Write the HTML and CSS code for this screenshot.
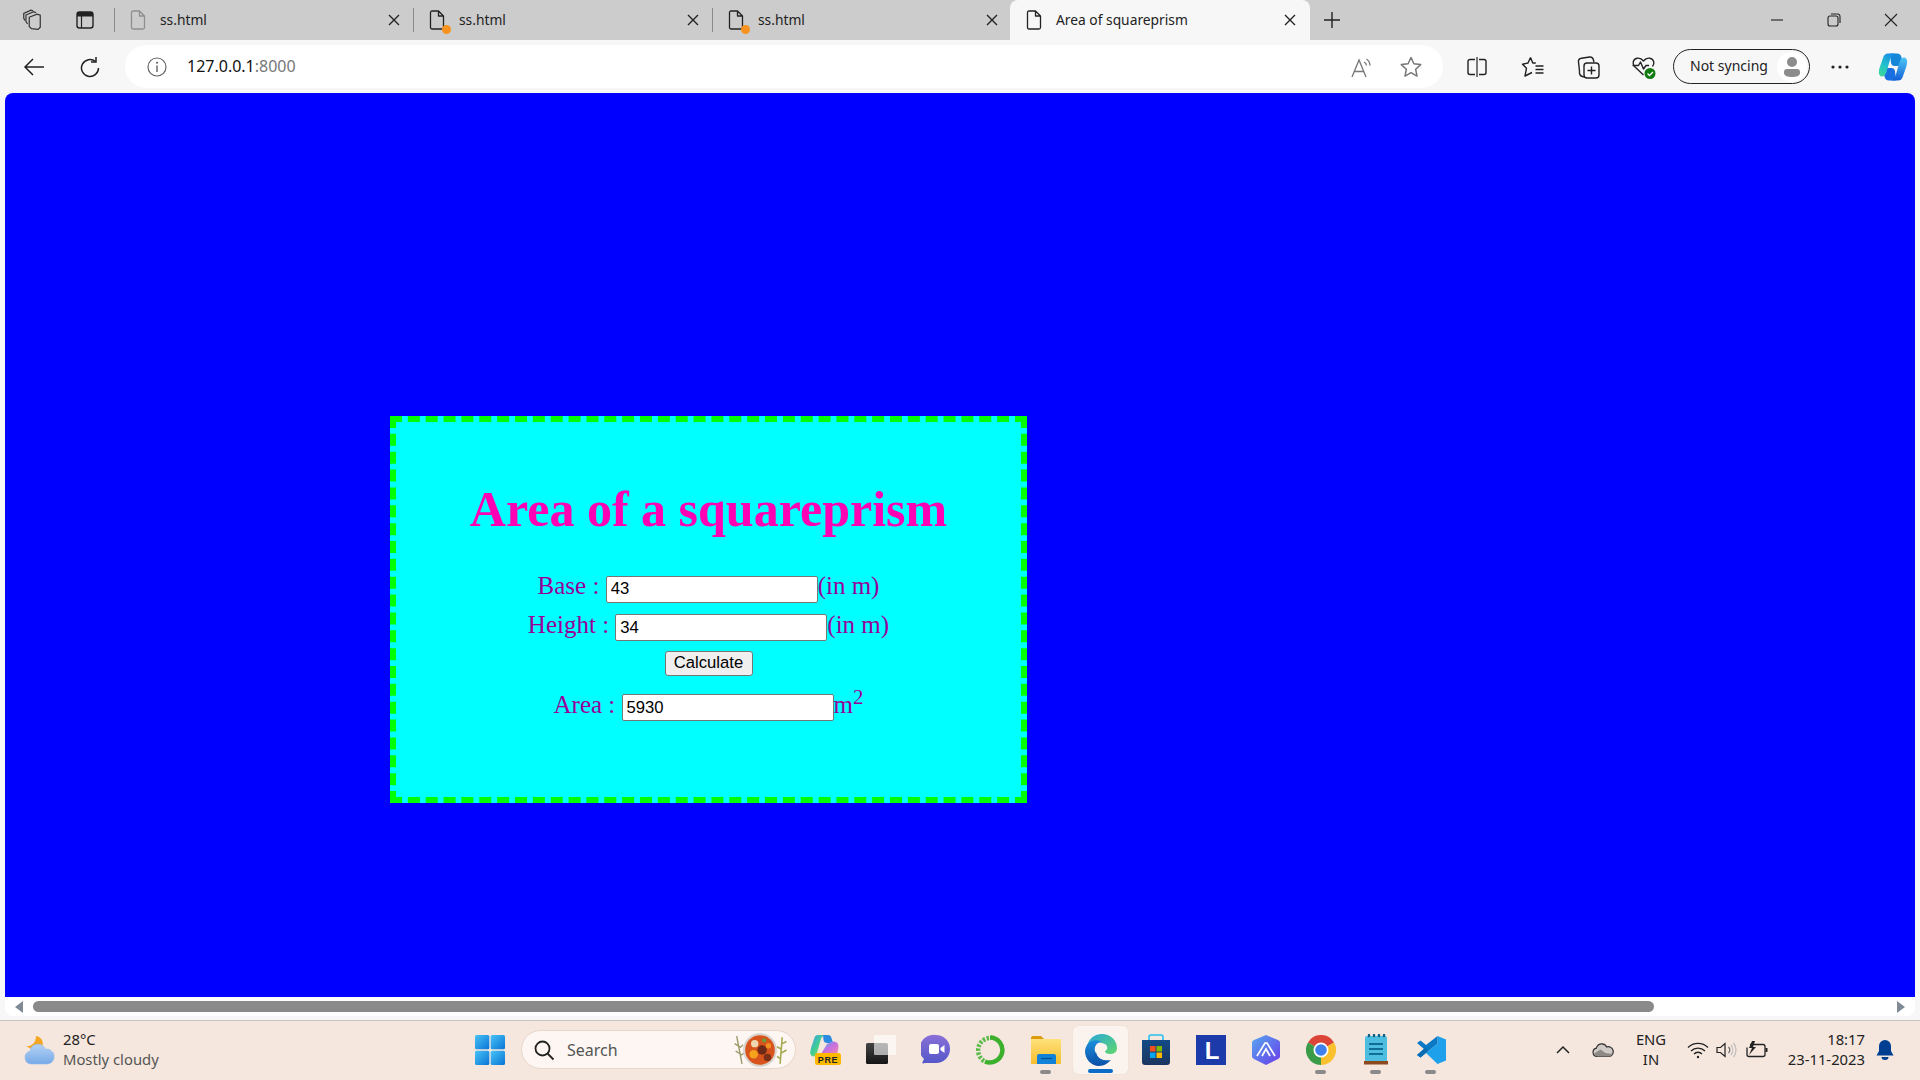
FILE: index.html
```html
<!DOCTYPE html>
<html lang="en">
<head>
    <meta charset="UTF-8">
    <title>Area of squareprism</title>
    <link rel="stylesheet" href="styles.css">
</head>
<body>
    <svg class="defs" width="0" height="0">
        <defs>
            <symbol id="doc" viewBox="0 0 16 20">
                <path d="M2.5 1h7L14.5 6v11.5a1.5 1.5 0 0 1-1.5 1.5H3a1.5 1.5 0 0 1-1.5-1.5v-15A1.5 1.5 0 0 1 2.5 1zM9.5 1v5h5" fill="none" stroke="currentColor" stroke-width="1.3" stroke-linejoin="round"/>
            </symbol>
            <symbol id="close" viewBox="0 0 12 12">
                <path d="M1 1l10 10M11 1L1 11" fill="none" stroke="currentColor" stroke-width="1.4"/>
            </symbol>
            <linearGradient id="copilotA" x1="0.6" y1="0" x2="0.2" y2="1">
                <stop offset="0" stop-color="#1b8fe8"/>
                <stop offset="0.55" stop-color="#22c4c8"/>
                <stop offset="1" stop-color="#3fd89a"/>
            </linearGradient>
            <linearGradient id="copilotB" x1="0.5" y1="0" x2="0.4" y2="1">
                <stop offset="0" stop-color="#4cc4f4"/>
                <stop offset="1" stop-color="#1560d8"/>
            </linearGradient>
            <linearGradient id="copilotC" x1="0" y1="0" x2="1" y2="1">
                <stop offset="0" stop-color="#38b6e8"/>
                <stop offset="0.5" stop-color="#c86fe0"/>
                <stop offset="1" stop-color="#f08ab0"/>
            </linearGradient>
            <linearGradient id="copilotD" x1="0" y1="0" x2="1" y2="1">
                <stop offset="0" stop-color="#3fa0f0"/>
                <stop offset="0.5" stop-color="#3ecf90"/>
                <stop offset="1" stop-color="#f5d040"/>
            </linearGradient>
            <linearGradient id="cloud" x1="0" y1="0" x2="0" y2="1">
                <stop offset="0" stop-color="#b5d3f5"/>
                <stop offset="1" stop-color="#76a9e8"/>
            </linearGradient>
            <linearGradient id="win" x1="0" y1="0" x2="1" y2="1">
                <stop offset="0" stop-color="#47c3f7"/>
                <stop offset="1" stop-color="#0a74d6"/>
            </linearGradient>
            <linearGradient id="meet" x1="0" y1="0" x2="0" y2="1">
                <stop offset="0" stop-color="#8a6fd8"/>
                <stop offset="1" stop-color="#5457c8"/>
            </linearGradient>
            <linearGradient id="folder" x1="0" y1="0" x2="0" y2="1">
                <stop offset="0" stop-color="#fde27a"/>
                <stop offset="1" stop-color="#f8bd2c"/>
            </linearGradient>
            <linearGradient id="edgeA" x1="0" y1="0" x2="1" y2="1">
                <stop offset="0" stop-color="#2aa6dc"/>
                <stop offset="1" stop-color="#5fd86c"/>
            </linearGradient>
            <linearGradient id="edgeB" x1="0" y1="0" x2="0" y2="1">
                <stop offset="0" stop-color="#1a8fdc"/>
                <stop offset="1" stop-color="#0c4fa8"/>
            </linearGradient>
            <linearGradient id="store" x1="0" y1="0" x2="0" y2="1">
                <stop offset="0" stop-color="#134a86"/>
                <stop offset="1" stop-color="#1b3560"/>
            </linearGradient>
            <linearGradient id="hexa" x1="0" y1="0" x2="1" y2="1">
                <stop offset="0" stop-color="#56a8f0"/>
                <stop offset="1" stop-color="#6a3ce8"/>
            </linearGradient>
            <linearGradient id="black" x1="0" y1="0" x2="0" y2="1">
                <stop offset="0" stop-color="#444"/>
                <stop offset="1" stop-color="#151515"/>
            </linearGradient>
        </defs>
    </svg>

    <!-- browser tabs -->
    <div class="tabstrip">
        <div class="strip-tools">
            <svg class="strip-icon" width="22" height="22" viewBox="0 0 18 20" fill="none" stroke="#333" stroke-width="1.100">
                <path d="M6.500 7.500l7-2.800 3 .9v11l-2 2-6-.7-2-2z"/>
                <path d="M5 13.500l-1.500-2V5.500l7-3 2.200.9"/>
                <path d="M2.600 10.500L1.500 8.500V4l6.500-3 2 .6"/>
            </svg>
            <svg class="strip-icon" width="20" height="20" viewBox="0 0 20 20">
                <rect x="2" y="2" width="16" height="16" rx="2.500" fill="none" stroke="#222" stroke-width="1.400"/>
                <path d="M2 5a3 3 0 0 1 3-3h10a3 3 0 0 1 3 3v1.500H2z" fill="#222"/>
                <path d="M6.500 6v12" stroke="#222" stroke-width="1.200"/>
            </svg>
        </div>
        <div class="tab">
            <svg class="tab-doc faded" width="16" height="20"><use href="#doc"/></svg>
            <span class="tab-title">ss.html</span>
            <svg class="tab-close" width="12" height="12"><use href="#close"/></svg>
        </div>
        <div class="tab">
            <span class="doc-wrap">
                <svg class="tab-doc" width="16" height="20"><use href="#doc"/></svg>
                <i class="unsaved"></i>
            </span>
            <span class="tab-title">ss.html</span>
            <svg class="tab-close" width="12" height="12"><use href="#close"/></svg>
        </div>
        <div class="tab">
            <span class="doc-wrap">
                <svg class="tab-doc" width="16" height="20"><use href="#doc"/></svg>
                <i class="unsaved"></i>
            </span>
            <span class="tab-title">ss.html</span>
            <svg class="tab-close" width="12" height="12"><use href="#close"/></svg>
        </div>
        <div class="tab active">
            <svg class="tab-doc" width="16" height="20"><use href="#doc"/></svg>
            <span class="tab-title">Area of squareprism</span>
            <svg class="tab-close" width="12" height="12"><use href="#close"/></svg>
        </div>
        <svg class="new-tab" width="18" height="18" viewBox="0 0 18 18"><path d="M9 1v16M1 9h16" stroke="#222" stroke-width="1.400"/></svg>
        <div class="window-btns">
            <button class="win-btn"><svg width="12" height="12" viewBox="0 0 12 12"><path d="M0 6h12" stroke="#222" stroke-width="1.100"/></svg></button>
            <button class="win-btn"><svg width="14" height="14" viewBox="0 0 14 14" fill="none" stroke="#222" stroke-width="1.100"><rect x="1" y="3" width="10" height="10" rx="2"/><path d="M4 1h6.500A2.500 2.500 0 0 1 13 3.500V10"/></svg></button>
            <button class="win-btn"><svg width="14" height="14" viewBox="0 0 14 14"><path d="M1 1l12 12M13 1L1 13" stroke="#222" stroke-width="1.100"/></svg></button>
        </div>
    </div>

    <!-- address bar row -->
    <div class="toolbar">
        <div class="tool">
            <svg width="22" height="20" viewBox="0 0 22 20" fill="none" stroke="#222" stroke-width="1.500"><path d="M21 10H2M10 2l-8 8 8 8"/></svg>
        </div>
        <div class="tool">
            <svg width="20" height="22" viewBox="0 0 20 22" fill="none" stroke="#222" stroke-width="1.500"><path d="M15.500 5.500A8.500 8.500 0 1 0 18.500 12"/><path d="M16 1v5h-5"/></svg>
        </div>
        <div class="address">
            <svg width="20" height="20" viewBox="0 0 20 20">
                <circle cx="10" cy="10" r="9" fill="none" stroke="#666" stroke-width="1.200"/>
                <path d="M10 8.500V15" stroke="#555" stroke-width="1.300"/>
                <circle cx="10" cy="5.800" r="1" fill="#555"/>
            </svg>
            <span class="url">127.0.0.1<span class="port">:8000</span></span>
            <div class="address-right">
                <svg width="24" height="24" viewBox="0 0 24 24" fill="none" stroke="#777" stroke-width="1.300"><path d="M3 22L10 5l7 17M5.500 16.500h9"/><path d="M15 7a4 4 0 0 1 2.500 3.500M17.500 4a8 8 0 0 1 3.500 6.500"/></svg>
                <svg width="24" height="24" viewBox="0 0 24 24" fill="none" stroke="#777" stroke-width="1.500" stroke-linejoin="round"><path d="M12 2.500l2.900 6.300 6.800.8-5 4.700 1.300 6.800-6-3.400-6 3.400 1.300-6.800-5-4.700 6.800-.8z"/></svg>
            </div>
        </div>
        <div class="tool first-right">
            <svg width="22" height="22" viewBox="0 0 22 22" fill="none" stroke="#222" stroke-width="1.400"><path d="M9 3.500H4A2 2 0 0 0 2 5.500v11a2 2 0 0 0 2 2h5M13 3.500h5a2 2 0 0 1 2 2v11a2 2 0 0 1-2 2h-5"/><path d="M11 1v20" stroke-width="1.200"/></svg>
        </div>
        <div class="tool">
            <svg width="24" height="24" viewBox="0 0 24 24" fill="none" stroke="#222" stroke-width="1.400" stroke-linejoin="round"><path d="M9.500 2.500l2.300 5.500h3M9.500 2.500L7 8 1.500 9.200l4 4L4 21l7-3.500"/><path d="M14.500 11h8M14.500 14.500h8M14.500 18h8"/></svg>
        </div>
        <div class="tool">
            <svg width="24" height="24" viewBox="0 0 24 24" fill="none" stroke="#222" stroke-width="1.400" stroke-linejoin="round"><path d="M8 22l-2-.2C3 21 2 19 2.500 16L1.500 7c-.3-2 1-3.500 3-3.800l8-1.200c2-.2 3.300.8 3.800 2.500l.7 2.500"/><rect x="7" y="8" width="15" height="15" rx="3" fill="#f7f7f7"/><path d="M14.500 11.500v8M10.500 15.500h8"/></svg>
        </div>
        <div class="tool health">
            <svg width="26" height="26" viewBox="0 0 26 26" fill="none" stroke="#222" stroke-width="1.400" stroke-linejoin="round"><path d="M12.500 21L3.500 12.500C1 9.500 2 5 6 4.200c2.500-.4 5 .8 6.500 2.800 1.500-2 4-3.200 6.500-2.800 4 .8 5 5.300 2.500 8.300"/><path d="M1.500 11.500h6l2-3.500 3 7 2.500-3.500h3"/><circle cx="19" cy="19.500" r="5.500" fill="#107c10" stroke="none"/><path d="M16.500 19.500l2 2 3.500-3.500" stroke="#fff" stroke-width="1.300"/></svg>
        </div>
        <div class="sync-pill">
            <span class="sync-label">Not syncing</span>
            <span class="avatar">
                <svg width="18" height="22" viewBox="0 0 18 22" fill="#8c8c8c"><circle cx="9" cy="6" r="5"/><path d="M1 16a3 3 0 0 1 3-3h10a3 3 0 0 1 3 3v1c0 3-4 4-8 4s-8-1-8-4z"/></svg>
            </span>
        </div>
        <div class="tool more">
            <svg width="18" height="4" viewBox="0 0 18 4" fill="#222"><circle cx="2" cy="2" r="1.600"/><circle cx="9" cy="2" r="1.600"/><circle cx="16" cy="2" r="1.600"/></svg>
        </div>
        <div class="tool copilot">
            <svg width="30" height="30" viewBox="0 0 30 30">
                <path d="M12 1.500h7c2.500 0 4 1.500 4.500 4l2 8.500h-9c-2 0-3-1-3.500-3z" fill="#1487d8"/>
                <path d="M18 28.500h-7c-2.500 0-4-1.500-4.500-4l-2-8.500h9c2 0 3 1 3.500 3z" fill="#1a6fe0"/>
                <path d="M10 1.500h7c-3 1-4.500 4-5.500 8L8.500 20c-.8 3-3 5-5.500 4.500C.5 23 .5 20 1.500 16L5 6c.8-3 2.500-4.500 5-4.500z" fill="url(#copilotA)"/>
                <path d="M20 28.500h-7c3-1 4.500-4 5.500-8L21.500 10c.8-3 3-5 5.500-4.500 2.500 1.500 2.500 4.500 1.500 8.500L25 24c-.8 3-2.500 4.500-5 4.500z" fill="url(#copilotB)"/>
            </svg>
        </div>
    </div>

    <!-- page area -->
    <div class="viewport">
        <main class="page">
            <div class="card">
                <h1>Area of a squareprism</h1>
                <div class="row first">Base : <input type="text" value="43">(in m)</div>
                <div class="row tight">Height : <input type="text" value="34">(in m)</div>
                <div class="row-btn"><button class="calc">Calculate</button></div>
                <div class="row">Area : <input type="text" value="5930">m<sup>2</sup></div>
            </div>
        </main>
        <div class="hscroll">
            <svg class="scroll-arrow" width="8" height="12" viewBox="0 0 8 12"><path d="M8 0v12L0 6z" fill="#7f8a94"/></svg>
            <div class="thumb"></div>
            <svg class="scroll-arrow right" width="8" height="12" viewBox="0 0 8 12"><path d="M0 0v12l8-6z" fill="#7f8a94"/></svg>
        </div>
    </div>

    <!-- windows taskbar -->
    <div class="taskbar">
        <div class="weather">
            <svg width="32" height="30" viewBox="0 0 32 30">
                <path d="M12 1c6 1 8 6 6 12l-7 3-9-5c5 1 10-3 10-10z" fill="#f5a623"/>
                <path d="M7 29a6.500 6.500 0 0 1-1-12.800 8 8 0 0 1 15.300-2 7.500 7.500 0 0 1 2.700 14.800z" fill="url(#cloud)" stroke="#8fb8ea" stroke-width=".6"/>
            </svg>
            <div class="weather-text">
                <div>28°C</div>
                <div class="dim">Mostly cloudy</div>
            </div>
        </div>
        <svg class="start" width="30" height="30" viewBox="0 0 30 30" fill="url(#win)">
            <rect x="0" y="0" width="14.300" height="14.300" rx="1.500"/>
            <rect x="15.700" y="0" width="14.300" height="14.300" rx="1.500"/>
            <rect x="0" y="15.700" width="14.300" height="14.300" rx="1.500"/>
            <rect x="15.700" y="15.700" width="14.300" height="14.300" rx="1.500"/>
        </svg>
        <div class="search">
            <svg width="22" height="22" viewBox="0 0 22 22" fill="none" stroke="#222" stroke-width="1.800"><circle cx="9.500" cy="9.500" r="7"/><path d="M14.500 14.500l6 6"/></svg>
            <span class="search-label">Search</span>
            <svg class="search-art" width="62" height="36" viewBox="0 0 58 34">
                <path d="M7 4l5 26M5 11l5 3M13 12l-3 3M6 18l5 3M14 20l-3 2" stroke="#9a9a6a" stroke-width="1.300" fill="none"/>
                <circle cx="29" cy="17" r="16" fill="#d9d5d0"/>
                <circle cx="29" cy="17" r="14" fill="#d8541c"/>
                <circle cx="24" cy="11" r="3.500" fill="#f0d6b0"/>
                <circle cx="33" cy="8" r="2" fill="#6aa03a"/>
                <circle cx="23" cy="21" r="4" fill="#f5a21c"/>
                <circle cx="31" cy="17" r="4.500" fill="#6e2a18"/>
                <circle cx="36" cy="24" r="3.500" fill="#7a3018"/>
                <circle cx="37" cy="13" r="2.500" fill="#f09020"/>
                <path d="M50 5l-2 25M50 11l4-2M49 16l-4-2M49 20l5-3M48 25l-3-2" stroke="#a5aa50" stroke-width="1.500" fill="none"/>
            </svg>
        </div>
        <div class="apps">
            <div class="app">
                <svg width="34" height="34" viewBox="0 0 34 34">
                    <path d="M9 2h7c-3 1-4 3-5 7l-3 11c-.8 3-3 4-5 3C1 22 1 19 2 15L5 6c.8-3 2-4 4-4z" fill="url(#copilotD)"/>
                    <path d="M14 2h5c2 0 3 1 3.500 3L24 10h-6c-2 0-3-1-3.500-3z" fill="#2b8be0"/>
                    <path d="M22 9c3-1 6 0 7 2 1 3 0 7-1 10H12l6-10z" fill="url(#copilotC)"/>
                    <rect x="6" y="20" width="26" height="12" rx="2.500" fill="#fdb900"/>
                    <text x="19" y="29.500" class="pre-text">PRE</text>
                </svg>
            </div>
            <div class="app">
                <svg width="32" height="32" viewBox="0 0 32 32">
                    <rect x="1" y="9" width="22" height="21" rx="1.500" fill="url(#black)"/>
                    <rect x="9" y="1" width="22" height="20" rx="1" fill="#fff" fill-opacity=".62"/>
                </svg>
            </div>
            <div class="app">
                <svg width="30" height="32" viewBox="0 0 30 32">
                    <path d="M15 1a14 14 0 0 1 0 28H3.500c-1.500 1-2.500.5-2-1l1.500-3A14 14 0 0 1 15 1z" fill="url(#meet)"/>
                    <rect x="8" y="10" width="10" height="10" rx="2" fill="#fff"/>
                    <path d="M19.500 14l4-3v8l-4-3z" fill="#fff"/>
                </svg>
            </div>
            <div class="app">
                <svg width="30" height="30" viewBox="0 0 30 30" fill="none">
                    <path d="M14 2.500a12.500 12.500 0 1 1-5 24" stroke="#3cb02c" stroke-width="4.500"/>
                    <path d="M8 26A12.500 12.500 0 0 1 13 3" stroke="#5cbb4c" stroke-width="4.500" stroke-dasharray="2.500 1.500"/>
                </svg>
            </div>
            <div class="app has-dot">
                <svg width="32" height="30" viewBox="0 0 32 30">
                    <path d="M1 3a2 2 0 0 1 2-2h8l4 4H1z" fill="#dd9c10"/>
                    <path d="M1 4h29a1 1 0 0 1 1 1v23a1 1 0 0 1-1 1H1z" fill="url(#folder)"/>
                    <path d="M7 21a2 2 0 0 1 2-2h15a2 2 0 0 1 2 2v8H7z" fill="#1282d8"/>
                    <path d="M11 23.500h11" stroke="#0a4f8c" stroke-width="1.200"/>
                </svg>
            </div>
            <div class="app current">
                <svg width="32" height="32" viewBox="0 0 32 32">
                    <path d="M2 12C4 4 10 0 17 0c8 0 15 6 15 14 0 4-3 6-7 6-3 0-5-1-5-3 3-1 3-5 0-7C13 7 5 7 2 12z" fill="url(#edgeA)"/>
                    <path d="M2 11C5 6 12 5 17 8c-5 0-8 4-7 9 1 7 8 11 16 9-3 3-7 6-12 6C6 32 0 25 0 17c0-2 1-4 2-6z" fill="url(#edgeB)"/>
                    <path d="M11 18c1 7 9 11 17 7-4 2-12 5-18 1-2-2-1-6 1-8z" fill="#0f5fb5"/>
                </svg>
            </div>
            <div class="app">
                <svg width="30" height="32" viewBox="0 0 30 32">
                    <path d="M8 6V3a2 2 0 0 1 2-2h10a2 2 0 0 1 2 2v3" fill="none" stroke="#28c0f0" stroke-width="1.600"/>
                    <path d="M1 6h28v22a3 3 0 0 1-3 3H4a3 3 0 0 1-3-3z" fill="url(#store)"/>
                    <rect x="9" y="12" width="5.500" height="5.500" fill="#f25022"/>
                    <rect x="15.500" y="12" width="5.500" height="5.500" fill="#7fba00"/>
                    <rect x="9" y="18.500" width="5.500" height="5.500" fill="#00a4ef"/>
                    <rect x="15.500" y="18.500" width="5.500" height="5.500" fill="#ffb900"/>
                </svg>
            </div>
            <div class="app">
                <svg width="30" height="30" viewBox="0 0 30 30">
                    <rect width="30" height="30" fill="#1c3aa9"/>
                    <path d="M9 24l3-18v18z" fill="#0d1f5c"/>
                    <text x="16" y="24" class="l-text">L</text>
                </svg>
            </div>
            <div class="app">
                <svg width="28" height="30" viewBox="0 0 28 30">
                    <path d="M14 0l12 5a3 3 0 0 1 2 3v13a3 3 0 0 1-2 3l-12 6-12-6a3 3 0 0 1-2-3V8a3 3 0 0 1 2-3z" fill="url(#hexa)"/>
                    <path d="M5 21L13 8l2 0 8 13M10 21l4-7 4 7" fill="none" stroke="#fff" stroke-width="1.700"/>
                </svg>
            </div>
            <div class="app has-dot">
                <svg width="30" height="30" viewBox="0 0 30 30">
                    <path d="M15 15L2 7.500A15 15 0 0 1 28 7.500z" fill="#db4437"/>
                    <path d="M15 15l13-7.500A15 15 0 0 1 15 30z" fill="#fbc02d"/>
                    <path d="M15 15v15A15 15 0 0 1 2 7.500z" fill="#3a9c48"/>
                    <circle cx="15" cy="15" r="7.500" fill="#fff"/>
                    <circle cx="15" cy="15" r="5.800" fill="#3f80ec"/>
                </svg>
            </div>
            <div class="app has-dot">
                <svg width="24" height="31" viewBox="0 0 24 31">
                    <rect x="1" y="2" width="22" height="26" rx="2" fill="#4dbde0"/>
                    <rect x="0" y="27" width="24" height="3.500" fill="#8c4a1e"/>
                    <path d="M5 2v-1M10 2v-1M15 2v-1M20 2v-1" stroke="#115e82" stroke-width="2.400" stroke-linecap="round"/>
                    <path d="M5 10h14M5 15h14M5 20h14" stroke="#0f6d96" stroke-width="2"/>
                </svg>
            </div>
            <div class="app has-dot">
                <svg width="30" height="30" viewBox="0 0 30 30">
                    <path d="M21.500 1L30 4.500v21L21.500 29 10 18l11.500-9.500z" fill="#1ea1ea"/>
                    <path d="M21.500 1v7.500L10 18l-5.500 4.500L1 20l7-6-7-6 3.500-2.500L10 10z" fill="#0a78c4"/>
                    <path d="M4.500 22.500L1 20l9-8 2 4z" fill="#0a6cb4"/>
                </svg>
            </div>
        </div>
        <div class="tray">
            <svg class="tray-chevron" width="14" height="9" viewBox="0 0 14 9"><path d="M1 8l6-6 6 6" fill="none" stroke="#222" stroke-width="1.500"/></svg>
            <svg class="tray-cloud" width="22" height="14" viewBox="0 0 22 14"><path d="M5 13.500a4.200 4.200 0 0 1-.6-8.300 5.500 5.500 0 0 1 10.300-1.300 4.800 4.800 0 0 1 3 9.600z" fill="#d0cbc6" stroke="#333" stroke-width="1.200"/><path d="M1.500 11l7-4.500 5 3.500 7 1-2 2.500H5z" fill="#8d8984"/></svg>
            <div class="lang">ENG<br>IN</div>
            <svg class="tray-wifi" width="22" height="18" viewBox="0 0 22 18" fill="none" stroke="#222" stroke-width="1.300"><path d="M1 6.500a14 14 0 0 1 20 0M4 10a10 10 0 0 1 14 0M7 13a5.500 5.500 0 0 1 8 0"/><circle cx="11" cy="16" r="1.200" fill="#222" stroke="none"/></svg>
            <svg class="tray-sound" width="32" height="18" viewBox="0 0 32 18" fill="none" stroke-width="1.200"><path d="M3 6.500h3.500L11 2.500v13l-4.500-4H3z" stroke="#222"/><path d="M14.500 6a4.500 4.500 0 0 1 0 6" stroke="#666"/><path d="M17 4a8 8 0 0 1 0 10M19.500 2a11 11 0 0 1 0 14" stroke="#bbb"/></svg>
            <svg class="tray-batt" width="34" height="20" viewBox="0 0 34 20" fill="none"><path d="M9 4.500h13a2 2 0 0 1 2 2v8a2 2 0 0 1-2 2H8a2 2 0 0 1-2-2v-7" stroke="#222" stroke-width="1.300"/><path d="M24.500 8h2v4h-2z" fill="#222"/><path d="M11 1L8 8h3l-3 7 7-8h-3l2-6z" fill="#222"/></svg>
            <div class="clock">18:17<br>23-11-2023</div>
            <svg class="tray-bell" width="40" height="22" viewBox="0 0 40 22"><path d="M20 1a6 6 0 0 1 6 6v5l2.500 4.500h-17L14 12V7a6 6 0 0 1 6-6z" fill="#003e92"/><path d="M16.500 18h7a3.500 3 0 0 1-7 0z" fill="#003e92"/></svg>
        </div>
    </div>
</body>
</html>
```

FILE: styles.css
```css
/* Whole screen */
html, body {
    margin: 0;
    padding: 0;
}

body {
    width: 1920px;
    height: 1080px;
    overflow: hidden;
    display: flex;
    flex-direction: column;
    background-color: #f7f7f7;
    font-family: "Noto Sans", "Open Sans", sans-serif;
    color: #222;
}

.defs {
    position: absolute;
}

/* Tab strip */
.tabstrip {
    height: 40px;
    flex: none;
    display: flex;
    align-items: center;
    background-color: #cccccc;
}

.strip-tools {
    width: 114px;
    height: 40px;
    flex: none;
    box-sizing: border-box;
    padding-left: 21px;
    display: flex;
    align-items: center;
    gap: 32px;
}

.tab {
    position: relative;
    width: 299px;
    height: 40px;
    flex: none;
    box-sizing: border-box;
    padding: 0 13px 0 16px;
    display: flex;
    align-items: center;
    gap: 14px;
    font-size: 13.8px;
    color: #222;
}

.tab::before {
    content: '';
    position: absolute;
    left: 0;
    top: 8px;
    height: 24px;
    width: 1px;
    background-color: #8a8a8a;
}

.tab.active {
    width: 300px;
    margin-left: -1px;
    padding-right: 14px;
    background-color: #f7f7f7;
    border-radius: 8px 8px 0 0;
}

.tab.active::before {
    display: none;
}

.tab-title {
    margin-bottom: 2px;
}

.tab-doc {
    display: block;
    color: #222;
    flex: none;
}

.tab-doc.faded {
    color: #8f8f8f;
}

.doc-wrap {
    position: relative;
    display: block;
    width: 16px;
    height: 20px;
    flex: none;
}

.unsaved {
    position: absolute;
    right: -6px;
    bottom: -4px;
    width: 9px;
    height: 9px;
    border-radius: 50%;
    background-color: #f7931e;
}

.tab-close {
    margin-left: auto;
    color: #222;
    flex: none;
}

.new-tab {
    margin-left: 13px;
    flex: none;
}

.window-btns {
    margin-left: auto;
    padding-right: 1px;
    display: flex;
}

.win-btn {
    width: 57px;
    height: 40px;
    padding: 0;
    border: none;
    background: none;
    display: flex;
    align-items: center;
    justify-content: center;
}

/* Toolbar */
.toolbar {
    height: 53px;
    flex: none;
    box-sizing: border-box;
    padding-left: 6px;
    display: flex;
    align-items: center;
    background-color: #f7f7f7;
}

.tool {
    width: 56px;
    height: 40px;
    flex: none;
    display: flex;
    align-items: center;
    justify-content: center;
}

.first-right {
    margin-left: 6px;
}

.health {
    padding-right: 2px;
    box-sizing: border-box;
}

.more {
    margin-left: 2px;
}

.copilot {
    width: 50px;
}

.address {
    width: 1318px;
    height: 43px;
    flex: none;
    margin-left: 7px;
    box-sizing: border-box;
    padding: 0 20px 0 22px;
    display: flex;
    align-items: center;
    gap: 20px;
    border-radius: 22px;
    background-color: #ffffff;
}

.url {
    font-size: 16px;
    color: #111;
    margin-top: -2px;
}

.port {
    color: #777;
}

.address-right {
    margin-left: auto;
    display: flex;
    align-items: center;
    gap: 26px;
}

.sync-pill {
    width: 137px;
    height: 35px;
    flex: none;
    box-sizing: border-box;
    padding: 0 2px 0 16px;
    display: flex;
    align-items: center;
    justify-content: space-between;
    border: 1.5px solid #222;
    border-radius: 18px;
    font-size: 14px;
}

.sync-label {
    margin-bottom: 2px;
}

.avatar {
    width: 30px;
    height: 30px;
    display: flex;
    align-items: center;
    justify-content: center;
    border-radius: 50%;
    background-color: #fff;
}

/* Page shown in the browser */
.viewport {
    height: 923px;
    flex: none;
    margin: 0 5px;
    display: flex;
    flex-direction: column;
    border-radius: 8px;
    overflow: hidden;
    background-color: #fff;
}

.page {
    height: 904px;
    flex: none;
    box-sizing: border-box;
    padding: 323px 0 0 385px;
    background-color: #0000ff;
}

.card {
    width: 637px;
    height: 387px;
    box-sizing: border-box;
    padding-top: 28px;
    border: 6px dashed #00ff00;
    background-color: #00ffff;
    text-align: center;
    font-family: "Liberation Serif", serif;
    font-size: 25px;
    color: #98009a;
}

h1 {
    margin: 30px 0 34px;
    font-size: 50px;
    color: #ff00b4;
}

.row {
    margin-bottom: 10px;
}

.row.first {
    margin-bottom: 8px;
}

.row.tight {
    margin-bottom: 5px;
}

.row input {
    width: 212px;
    height: 27px;
    box-sizing: border-box;
    padding: 1px 4px;
    border: 1px solid #767676;
    border-radius: 2px;
    background-color: #fff;
    font-family: "Liberation Sans", Arial, sans-serif;
    font-size: 16.67px;
    color: #000;
}

.row-btn {
    margin-bottom: 9px;
}

.calc {
    display: inline-block;
    width: 88px;
    height: 25px;
    padding: 0;
    border: 1px solid #767676;
    border-radius: 3px;
    background-color: #efefef;
    font-family: "Liberation Sans", Arial, sans-serif;
    font-size: 16.67px;
    color: #000;
}

/* Horizontal scrollbar */
.hscroll {
    height: 19px;
    flex: none;
    position: relative;
    background-color: #fff;
}

.scroll-arrow {
    position: absolute;
    left: 10px;
    top: 4px;
}

.scroll-arrow.right {
    left: auto;
    right: 10px;
}

.thumb {
    position: absolute;
    left: 28px;
    top: 4px;
    width: 1621px;
    height: 11px;
    border-radius: 6px;
    background-color: #8a8a8a;
}

/* Taskbar */
.taskbar {
    height: 60px;
    flex: none;
    margin-top: 4px;
    padding-bottom: 2px;
    display: flex;
    align-items: center;
    border-top: 1px solid #c9c4c0;
    box-sizing: border-box;
    background-color: #f6e7de;
    font-size: 14.8px;
}

.weather {
    width: 475px;
    flex: none;
    box-sizing: border-box;
    padding-left: 24px;
    display: flex;
    align-items: center;
    gap: 7px;
}

.weather-text {
    line-height: 20px;
    margin-bottom: 2px;
}

.dim {
    color: #555;
}

.start {
    flex: none;
}

.search {
    width: 275px;
    height: 39px;
    flex: none;
    margin-left: 16px;
    box-sizing: border-box;
    padding: 0 4px 0 11px;
    display: flex;
    align-items: center;
    gap: 12px;
    border: 1px solid #e6d6cc;
    border-radius: 20px;
    background-color: #fdf6f2;
}

.search-label {
    font-size: 16px;
    color: #555;
}

.search-art {
    margin-left: auto;
}

.apps {
    margin-left: 2px;
    display: flex;
}

.app {
    position: relative;
    width: 55px;
    height: 48px;
    display: flex;
    align-items: center;
    justify-content: center;
}

.app.has-dot::after {
    content: '';
    position: absolute;
    left: 22px;
    bottom: 0;
    width: 11px;
    height: 4px;
    border-radius: 2px;
    background-color: #8a8a8a;
}

.app.current {
    border-radius: 5px;
    background-color: #fbf3ee;
    box-shadow: 0 0 1px #d8ccc4;
}

.app.current::after {
    content: '';
    position: absolute;
    left: 15px;
    bottom: 1px;
    width: 25px;
    height: 4px;
    border-radius: 2px;
    background-color: #0a6cc8;
}

.pre-text {
    font-family: "Liberation Sans", sans-serif;
    font-size: 9px;
    font-weight: bold;
    letter-spacing: 0.6px;
    text-anchor: middle;
    fill: #222;
}

.l-text {
    font-family: "Liberation Sans", sans-serif;
    font-size: 24px;
    font-weight: bold;
    text-anchor: middle;
    fill: #fff;
}

.tray {
    margin-left: auto;
    flex: none;
    display: flex;
    align-items: center;
    line-height: 20px;
    padding-right: 15px;
}

.tray svg {
    flex: none;
}

.tray-chevron {
    margin-right: 22px;
}

.tray-cloud {
    margin-right: 11px;
}

.lang {
    width: 52px;
    text-align: center;
    margin-bottom: 2px;
}

.tray-wifi {
    margin-left: 10px;
}

.tray-sound {
    margin: 0 -5px 0 5px;
}

.clock {
    width: 90px;
    text-align: right;
    margin-bottom: 2px;
}
```
